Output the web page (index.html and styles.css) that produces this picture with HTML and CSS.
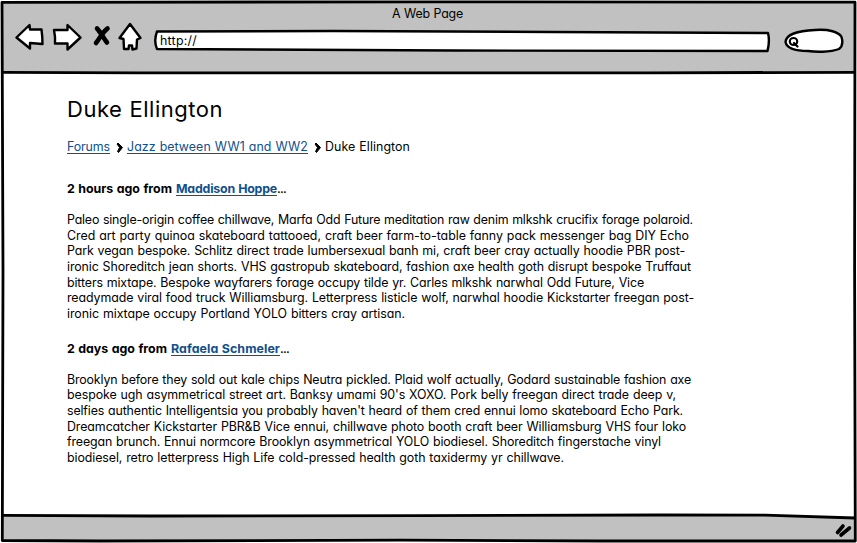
FILE: index.html
```html
<!DOCTYPE html>
<html lang="en">
<head>
<meta charset="utf-8">
<title>A Web Page</title>
<link rel="stylesheet" href="styles.css">
</head>
<body>
<div class="window">
  <svg class="frame" viewBox="0 0 857 543" aria-hidden="true">
    <path class="chrome" d="M3 2H854V72.5H3Z"/>
    <path class="chrome" d="M3 515.5L420 515.5L765 515.3L854 518V540.5H3Z"/>
    <path class="edge" d="M2 2.3L430 1.8L855 2.2L854.6 270L855.3 541L600 541L400 540.2L100 541L2.3 540.5L3 270Z"/>
    <path class="edge" d="M3 72.3L140 72.8L430 72.8L650 72.8L855 72.3"/>
    <path class="edge" d="M3 515.3L150 516L420 515.7L660 515L765 515.2L855 518"/>
    <path class="grip" d="M837.5 532.5L843 526M841 535L849.500 528"/>
  </svg>
  <header class="toolbar">
    <div class="window-title"><span class="fit">A Web Page</span></div>
    <div class="controls">
      <svg class="nav" viewBox="0 0 130 32" aria-hidden="true">
        <path class="shape" d="M1.500 16.500L14.500 4L15 8.500L26.500 8.500Q27.500 16 27.500 23L15 22L15 27.500Z"/>
        <path class="shape" d="M65.500 16.500L52.500 4L52.500 9L39 9Q40.500 16 40 22.500L52.500 22.500L52.500 28.500Z"/>
        <path class="cross" d="M82 7.500C85.500 11 89 17.500 92 21.500M92.500 7.500C88 10.500 85 17 81 22"/>
        <path class="shape" d="M115 3L104.500 17L108.500 18L109 28L113.500 28L114 24.500L117 24.500L117.500 28.500L121.500 27.500L122 18.500L125.500 17Z"/>
      </svg>
      <div class="address">
        <svg class="outline" viewBox="0 0 618 24" aria-hidden="true"><path class="field" d="M4 2.500L180 2L400 3L615 4Q617 12 614.500 22L300 21.500L4 20Q.5 12 4 2.500Z"/></svg>
        <span class="url fit">http://</span>
      </div>
      <svg class="search" viewBox="0 0 62 28" aria-hidden="true">
        <path class="field" d="M32 3C46 2 56 5 58.500 10C60 15 60 19 56 22C47 25.500 32 25 25 24C13 24 4 22 2.500 15C3 7 14 4 32 3Z"/>
        <ellipse class="lens" cx="10.500" cy="14.500" rx="3.700" ry="3.500"/>
        <path class="lens" d="M11 16L14.500 19.500"/>
      </svg>
    </div>
  </header>
  <main class="page">
    <h1><span class="fit">Duke Ellington</span></h1>
    <nav class="crumbs">
      <a class="fit forums">Forums</a>
      <svg class="chev" viewBox="0 0 8 12" aria-hidden="true"><path d="M2 1L6.500 5.500L2.500 10.500L1.500 9.500L3.500 5.500L1 2Z"/></svg>
      <a class="fit jazz">Jazz between WW1 and WW2</a>
      <svg class="chev" viewBox="0 0 8 12" aria-hidden="true"><path d="M2 1L6.500 5.500L2.500 10.500L1.500 9.500L3.500 5.500L1 2Z"/></svg>
      <span class="fit current">Duke Ellington</span>
    </nav>
    <article class="post first">
      <h2><span class="fit when">2 hours ago from</span><a class="fit author">Maddison Hoppe</a><span>...</span></h2>
      <p>
        <span class="fit">Paleo single-origin coffee chillwave, Marfa Odd Future meditation raw denim mlkshk crucifix forage polaroid.</span>
        <span class="fit">Cred art party quinoa skateboard tattooed, craft beer farm-to-table fanny pack messenger bag DIY Echo</span>
        <span class="fit">Park vegan bespoke. Schlitz direct trade lumbersexual banh mi, craft beer cray actually hoodie PBR post-</span>
        <span class="fit">ironic Shoreditch jean shorts. VHS gastropub skateboard, fashion axe health goth disrupt bespoke Truffaut</span>
        <span class="fit">bitters mixtape. Bespoke wayfarers forage occupy tilde yr. Carles mlkshk narwhal Odd Future, Vice</span>
        <span class="fit">readymade viral food truck Williamsburg. Letterpress listicle wolf, narwhal hoodie Kickstarter freegan post-</span>
        <span class="fit">ironic mixtape occupy Portland YOLO bitters cray artisan.</span>
      </p>
    </article>
    <article class="post second">
      <h2><span class="fit when">2 days ago from</span><a class="fit author">Rafaela Schmeler</a><span>...</span></h2>
      <p>
        <span class="fit">Brooklyn before they sold out kale chips Neutra pickled. Plaid wolf actually, Godard sustainable fashion axe</span>
        <span class="fit">bespoke ugh asymmetrical street art. Banksy umami 90's XOXO. Pork belly freegan direct trade deep v,</span>
        <span class="fit">selfies authentic Intelligentsia you probably haven't heard of them cred ennui lomo skateboard Echo Park.</span>
        <span class="fit">Dreamcatcher Kickstarter PBR&amp;B Vice ennui, chillwave photo booth craft beer Williamsburg VHS four loko</span>
        <span class="fit">freegan brunch. Ennui normcore Brooklyn asymmetrical YOLO biodiesel. Shoreditch fingerstache vinyl</span>
        <span class="fit">biodiesel, retro letterpress High Life cold-pressed health goth taxidermy yr chillwave.</span>
      </p>
    </article>
  </main>
</div>
<script src="fit.js"></script>
</body>
</html>
```
FILE: styles.css
```css
* { box-sizing: border-box; }
body {
  margin: 0;
  background: #fff;
  color: #000;
  font: 12.4px/15.65px Inter, "Liberation Sans", sans-serif;
  font-feature-settings: "cv11" 1, "calt" 0;
}
.window { position: relative; width: 857px; height: 543px; overflow: hidden; }
.frame { position: absolute; inset: 0; width: 857px; height: 543px; }
.frame path { fill: none; stroke: #000; stroke-width: 3; stroke-linejoin: round; }
.frame .edge { stroke-width: 2.8; }
.frame .chrome { fill: #c1c1c1; stroke: none; }
.frame .grip { stroke-width: 3.6; stroke-linecap: round; }
svg { display: block; flex: none; }

.toolbar { position: relative; height: 74px; padding-top: 6px; }
.window-title { display: flex; padding-left: 392px; height: 15px; }
.window-title .fit { --w: 71; }
.controls { display: flex; align-items: flex-start; padding-left: 15px; }
.nav { width: 130px; height: 32px; }
.shape, .field { fill: #fff; stroke: #000; stroke-width: 2.4; stroke-linejoin: round; }
.cross { fill: none; stroke: #000; stroke-width: 4.6; stroke-linecap: round; }
.address { position: relative; width: 618px; height: 24px; margin: 8px 0 0 8px; padding: 4px 0 0 7px; }
.outline { position: absolute; inset: 0; width: 618px; height: 24px; }
.url { position: relative; --w: 37; }
.search { width: 62px; height: 28px; margin: 6px 0 0 12px; }
.lens { fill: none; stroke: #000; stroke-width: 2.2; stroke-linecap: round; }

.page { position: relative; padding: 22px 0 0 67px; }
.fit { display: block; width: max-content; white-space: nowrap; word-spacing: .5px; }
h1 { margin: 0; height: 43px; font-size: 22px; line-height: 27px; font-weight: 400; }
h1 .fit { --w: 156; }
.crumbs { display: flex; height: 15px; }
.crumbs a, .author {
  color: #10508e;
  text-decoration: underline;
  text-decoration-thickness: 1px;
  text-underline-offset: 2px;
  text-decoration-skip-ink: none;
}
.forums { --w: 43; }
.jazz { --w: 181; }
.current { --w: 85; }
.chev { width: 8px; height: 12px; margin: 3px 3px 0 6px; }
.chev path { fill: #000; stroke: #000; stroke-width: 1; stroke-linejoin: round; }
h2 { display: flex; margin: 0 0 16px; font-size: 12.4px; line-height: 15px; font-weight: 700; }
h2 > span:last-child { font-weight: 500; letter-spacing: -.8px; }
p { margin: 0; }
.first { margin-top: 27px; }
.second { margin-top: 19px; }
.when { margin-right: 4px; }
.first .when { --w: 105; }
.first .author { --w: 101; }
.second .when { --w: 100; }
.second .author { --w: 109; }
.first p .fit:nth-child(1) { --w: 626; }
.first p .fit:nth-child(2) { --w: 622; }
.first p .fit:nth-child(3) { --w: 618; }
.first p .fit:nth-child(4) { --w: 624; }
.first p .fit:nth-child(5) { --w: 577; }
.first p .fit:nth-child(6) { --w: 627; }
.first p .fit:nth-child(7) { --w: 338; }
.second p .fit:nth-child(1) { --w: 624; }
.second p .fit:nth-child(2) { --w: 609; }
.second p .fit:nth-child(3) { --w: 616; }
.second p .fit:nth-child(4) { --w: 619; }
.second p .fit:nth-child(5) { --w: 594; }
.second p .fit:nth-child(6) { --w: 497; }
```
FILE: fit.js
```js
// Track each line so that it fills the measure given by --w.
document.querySelectorAll('.fit').forEach(function (el) {
  var target = parseFloat(getComputedStyle(el).getPropertyValue('--w'));
  var natural = el.getBoundingClientRect().width;
  el.style.letterSpacing = (target - natural) / el.textContent.length + 'px';
  el.style.width = target + 'px';
});
```
